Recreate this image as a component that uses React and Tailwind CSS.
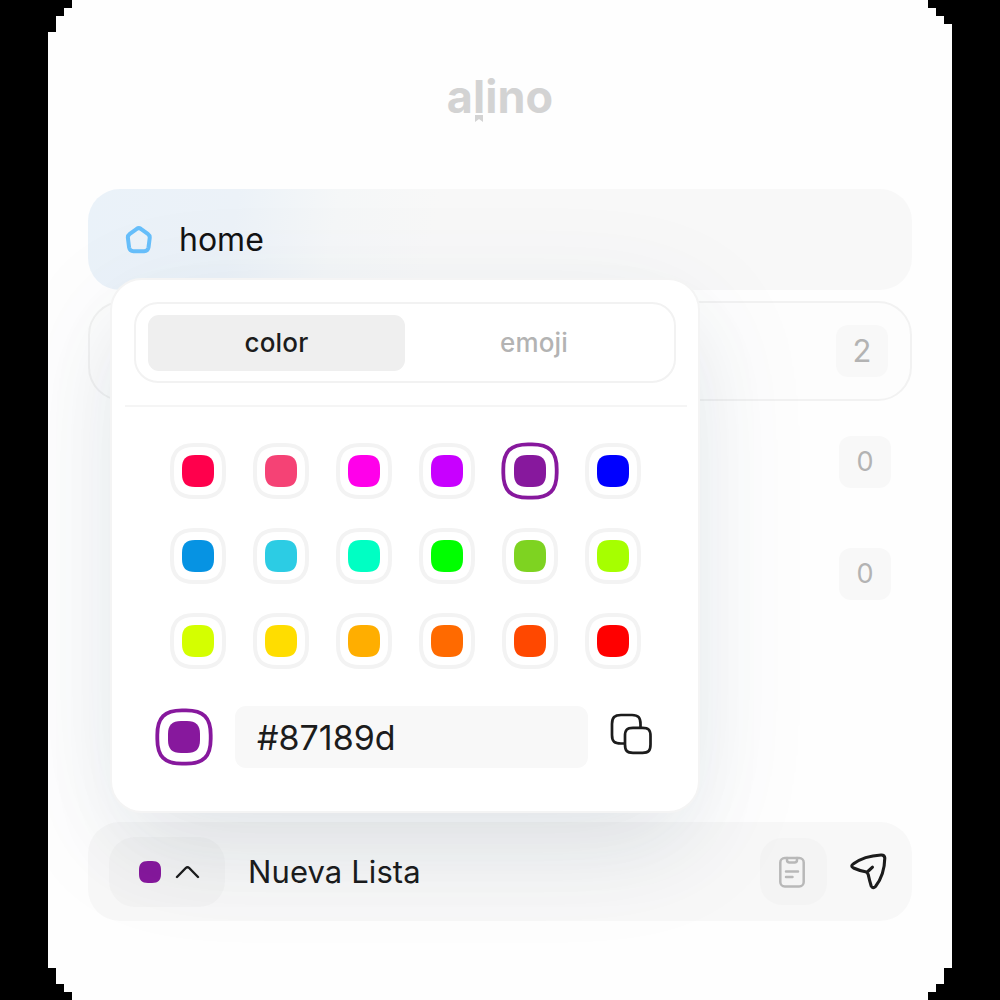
import React from "react";

const ROWS = [
  ["#ff004c", "#f54275", "#ff00ea", "#c800ff", "#87189d", "#0000ff"],
  ["#0693e3", "#2ccce4", "#00ffc3", "#00ff00", "#7ed321", "#a6ff00"],
  ["#d4ff00", "#ffdd00", "#ffae00", "#ff6a00", "#ff4800", "#ff0000"],
];

const CHIP = "M-16 -3C-16 -12 -12 -16 -3 -16H3C12 -16 16 -12 16 -3V3C16 12 12 16 3 16H-3C-12 16 -16 12 -16 3Z";

function Swatch({ color, selected }) {
  return (
    <svg className="block h-[58px] w-[58px]" viewBox="-29 -29 58 58" fill="none">
      <path
        d={
          selected
            ? "M-26.7 -2C-26.7 -19.500 -19.500 -26.7 -2 -26.7H2C19.500 -26.7 26.7 -19.500 26.7 -2V2C26.7 19.500 19.500 26.7 2 26.7H-2C-19.500 26.7 -26.7 19.500 -26.7 2Z"
            : "M-26 -4C-26 -19 -19 -26 -4 -26H4C19 -26 26 -19 26 -4V4C26 19 19 26 4 26H-4C-19 26 -26 19 -26 4Z"
        }
        stroke={selected ? color : "#f3f3f3"}
        strokeWidth={selected ? 3.8 : 4}
      />
      <path d={CHIP} fill={color} />
    </svg>
  );
}

function Count({ value, large }) {
  return (
    <div
      className={`flex h-[52px] w-[52px] items-center justify-center rounded-xl bg-[#f8f8f8] text-[#b3b3b3] ${
        large ? "text-[31px]" : "text-[27px]"
      }`}
    >
      {value}
    </div>
  );
}

function Picker() {
  return (
    <div className="absolute left-[62px] top-[278px] flex h-[535px] w-[590px] flex-col rounded-[32px] border-2 border-[#f4f4f4] bg-white pt-[22px] shadow-[0_30px_130px_rgba(25,70,115,0.07),0_40px_90px_-20px_rgba(30,45,60,0.085)]">
      <div className="ml-[22px] flex h-[81px] w-[542px] shrink-0 items-center rounded-[24px] border-2 border-[#f2f2f2] pl-[12px] pr-[11px] text-[26px] font-medium tracking-[0.2px]">
        <div className="flex h-14 w-[257px] items-center justify-center rounded-[11px] bg-[#efefef] text-[#1c1c1c]">
          color
        </div>
        <div className="flex h-14 flex-1 items-center justify-center text-[#b3b3b3]">emoji</div>
      </div>
      <div className="ml-[13px] mr-[11px] mt-[22px] h-[2px] shrink-0 bg-[#f5f5f5]" />
      <div className="ml-[56.5px] mt-[35px] flex flex-col gap-[27px]">
        {ROWS.map((row) => (
          <div key={row[0]} className="flex gap-[25px]">
            {row.map((c) => (
              <Swatch key={c} color={c} selected={c === "#87189d"} />
            ))}
          </div>
        ))}
      </div>
      <div className="ml-[43px] mt-[36px] flex h-[62px] items-center">
        <Swatch color="#87189d" selected />
        <div className="ml-[22px] flex h-[62px] w-[353px] items-center rounded-[11px] bg-[#f8f8f8] pl-[22px] text-[34px] text-[#1c1c1c]">
          #87189d
        </div>
        <svg className="-mt-[7px] ml-[22px] h-[42px] w-[42px]" viewBox="0 0 42 42" fill="none" stroke="#1c1c1c" strokeWidth="2.7" strokeLinejoin="round">
          <path d="M14 30.500H11C4.500 30.500 2 28.500 2 22V11C2 4.500 4.500 2 11 2H22C28.500 2 30.500 4.500 30.500 11V14.500" />
          <path d="M15 23C15 16.800 17 14.800 23 14.800H32.500C38.500 14.800 40.500 16.800 40.500 23V31.500C40.500 37.800 38.500 39.800 32.500 39.800H23C17 39.800 15 37.800 15 31.500Z" />
        </svg>
      </div>
    </div>
  );
}

export default function App() {
  return (
    <div className="h-[1000px] w-[1000px] overflow-hidden bg-black font-['Inter',sans-serif]">
      <main className="relative ml-12 flex h-[1000px] w-[904px] flex-col bg-[#fefefe] px-10 [clip-path:polygon(24px_0,880px_0,880px_8px,888px_8px,888px_16px,896px_16px,896px_24px,904px_24px,904px_968px,896px_968px,896px_984px,888px_984px,888px_992px,880px_992px,880px_1000px,24px_1000px,24px_992px,16px_992px,16px_984px,8px_984px,8px_968px,0_968px,0_32px,8px_32px,8px_16px,16px_16px,16px_8px,24px_8px)]">
        <header className="flex h-[189px] shrink-0 justify-center pt-[68px]">
          <div className="relative h-[58px] text-[45px] font-bold leading-[58px] tracking-[0.1px] text-[#d3d3d3]">
            alino
            <svg className="absolute left-[28px] top-[47px] h-[7px] w-[8px]" viewBox="0 0 8 7" fill="#d3d3d3">
              <path d="M0 0H8V7L4 4L0 7Z" />
            </svg>
          </div>
        </header>
        <div className="flex h-[101px] shrink-0 items-center rounded-[32px] bg-[linear-gradient(100deg,#eaf2f9_0%,#ecf2f8_18%,#f5f7f8_30%,#f8f8f8_42%)] pl-[37px]">
          <svg className="h-[28px] w-[28px]" viewBox="0 0 28 28" fill="none" stroke="#67bffb" strokeWidth="4" strokeLinejoin="round">
            <path d="M11.800 2.800Q13.800 1.500 15.800 2.800L22.800 7.800Q25 9.400 24.700 12L23.500 21.500Q22.800 25.200 19.200 25.200H8.400Q4.800 25.200 4.100 21.500L2.900 12Q2.600 9.400 4.800 7.800Z" />
          </svg>
          <span className="ml-[26px] text-[32px] text-[#131313]">home</span>
        </div>
        <div className="mt-[11px] flex h-[100px] shrink-0 items-center justify-end rounded-[34px] border-2 border-[#f2f2f2] bg-[#fdfdfd] pr-[22px]">
          <Count value="2" large />
        </div>
        <div className="mr-[21px] mt-[35px] flex flex-col items-end gap-[60px]">
          <Count value="0" />
          <Count value="0" />
        </div>
        <div className="mt-[222px] flex h-[99px] shrink-0 items-center rounded-[32px] bg-[#f8f8f8] px-[21px]">
          <div className="flex h-[70px] w-[116px] items-center rounded-[26px] bg-[#f3f3f3] pl-[30px]">
            <svg className="h-[22px] w-[22px]" viewBox="-16 -16 32 32" fill="#87189d">
              <path d={CHIP} />
            </svg>
            <svg className="ml-[14px] h-[14px] w-[25px]" viewBox="0 0 25 14" fill="none" stroke="#1c1c1c" strokeWidth="2.4" strokeLinecap="round" strokeLinejoin="round">
              <path d="M2 12L10.800 3Q12.500 1.400 14.200 3L23 12" />
            </svg>
          </div>
          <span className="ml-[23px] pt-px text-[31px] tracking-[0.1px] text-[#1c1c1c]">Nueva Lista</span>
          <div className="ml-auto flex h-[67px] w-[67px] items-center justify-center rounded-[22px] bg-[#f4f4f4] pr-[3px]">
            <svg className="h-[32px] w-[26px]" viewBox="0 0 26 32" fill="none" stroke="#b8b8b8" strokeWidth="2.500" strokeLinecap="round">
              <rect x="1.300" y="2" width="23.400" height="28.500" rx="4.500" />
              <path d="M8 2V4Q8 6.500 10.500 6.500H15.500Q18 6.500 18 4V2M7 15.500H19M7 21H13.500" />
            </svg>
          </div>
          <svg className="-mt-px ml-[22px] mr-[4px] h-[38px] w-[38px]" viewBox="0 0 38 38" fill="none" stroke="#1c1c1c" strokeWidth="3.100" strokeLinecap="round" strokeLinejoin="round">
            <path d="M4.500 11.800Q15 4 32 3Q35.500 2.800 35.800 6Q35.500 23 26.500 34.500Q24 37 22.200 34Q20.500 28.500 19.200 22.500Q18.500 20.300 16.500 19.800Q10 18.500 4.500 16Q1 14 4.500 11.800ZM18.300 20L23.500 15.200" />
          </svg>
        </div>
        <Picker />
      </main>
    </div>
  );
}
